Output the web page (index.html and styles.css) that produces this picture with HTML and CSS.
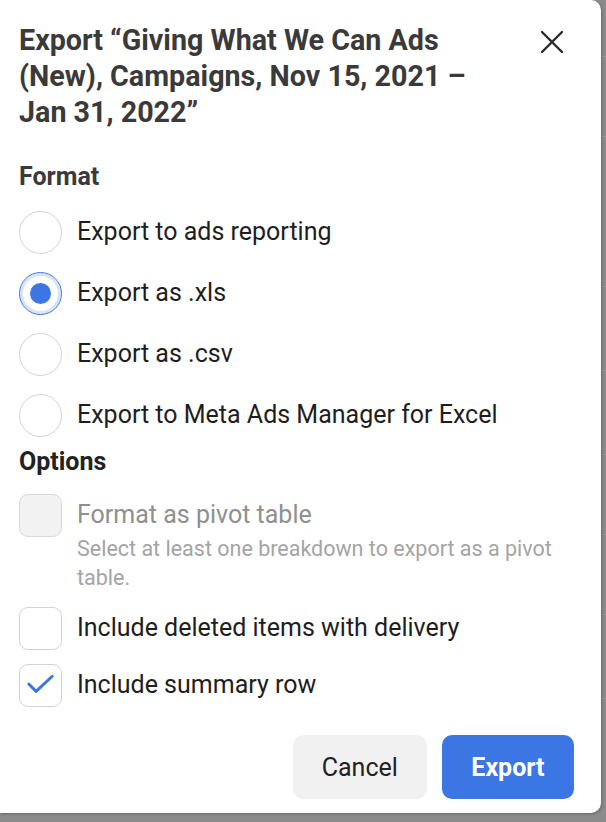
FILE: index.html
```html
<!DOCTYPE html>
<html lang="en">
<head>
<meta charset="utf-8">
<title>Export</title>
<link rel="stylesheet" href="styles.css">
</head>
<body>
<div class="page">
  <div class="bg-col">
    <div class="bg-row r1"><span>e</span></div>
    <div class="bg-row r2"><span>o</span></div>
    <div class="bg-row r3"><span>a</span></div>
    <div class="bg-row r3"><span>a</span></div>
    <div class="bg-row r4"><span>u</span></div>
    <div class="bg-row r4"><span>u</span></div>
    <div class="bg-row r3"><span>e</span></div>
    <div class="bg-row r3"><span>e</span></div>
  </div>
</div>

<div class="dialog">
  <div class="header">
    <h1 class="title">Export “Giving What We Can Ads<br>(New), Campaigns, Nov 15, 2021 –<br>Jan 31, 2022”</h1>
    <button class="close" aria-label="Close">
      <svg width="22" height="22" viewBox="0 0 22 22"><path d="M1 1 L21 21 M21 1 L1 21" stroke="#2b2b2b" stroke-width="2.4" stroke-linecap="round" fill="none"/></svg>
    </button>
  </div>

  <h2 class="section format-h">Format</h2>
  <div class="radios">
    <label class="row"><span class="radio"></span><span class="label">Export to ads reporting</span></label>
    <label class="row"><span class="radio checked"></span><span class="label">Export as .xls</span></label>
    <label class="row"><span class="radio"></span><span class="label">Export as .csv</span></label>
    <label class="row"><span class="radio"></span><span class="label">Export to Meta Ads Manager for Excel</span></label>
  </div>

  <h2 class="section options-h">Options</h2>
  <div class="checks">
    <div class="check-item">
      <label class="row"><span class="box disabled"></span><span class="label muted">Format as pivot table</span></label>
      <p class="hint">Select at least one breakdown to export as a pivot table.</p>
    </div>
    <label class="row"><span class="box"></span><span class="label">Include deleted items with delivery</span></label>
    <label class="row"><span class="box">
      <svg width="42" height="42" viewBox="0 0 42 42"><path d="M9 20 L16.5 27.5 L33 12" stroke="#3b76e4" stroke-width="3" stroke-linecap="round" stroke-linejoin="round" fill="none"/></svg>
    </span><span class="label">Include summary row</span></label>
  </div>

  <div class="footer">
    <button class="btn cancel">Cancel</button>
    <button class="btn primary">Export</button>
  </div>
</div>
</body>
</html>
```

FILE: styles.css
```css
* { box-sizing: border-box; }
html, body { margin: 0; padding: 0; }
body {
  width: 606px;
  height: 822px;
  overflow: hidden;
  background: #8b8b8b;
  font-family: Roboto, "Liberation Sans", Arial, sans-serif;
  position: relative;
}
.page {
  display: flex;
  justify-content: flex-end;
  height: 822px;
}
.bg-col {
  width: 30px;
  padding-top: 56px;
  display: flex;
  flex-direction: column;
}
.bg-row {
  border-top: 1px solid #9a9a9a;
  display: flex;
  align-items: center;
  font-size: 22px;
  color: #1a1a1a;
  padding-left: 2px;
}
.bg-row.r1 { height: 80px; }
.bg-row.r2 { height: 150px; padding-top: 30px; }
.bg-row.r3 { height: 84px; }
.bg-row.r4 { height: 80px; }

.dialog {
  position: absolute;
  left: 0;
  top: 0;
  width: 601px;
  height: 813px;
  background: #fff;
  border-radius: 0 10px 10px 0;
  box-shadow: 1px 1px 3px rgba(0,0,0,0.25);
  padding: 22px 28px 14px 19px;
  display: flex;
  flex-direction: column;
}
.header {
  display: flex;
  justify-content: space-between;
  align-items: flex-start;
}
.title {
  margin: 0;
  font-size: 28.7px;
  line-height: 36px;
  font-weight: 700;
  color: #3a3a3a;
}
.close {
  border: 0;
  background: none;
  padding: 0;
  margin: 9px 10px 0 0;
  width: 22px;
  height: 22px;
  display: flex;
}
.section {
  margin: 0;
  font-size: 25px;
  line-height: 30px;
  font-weight: 700;
}
.format-h { margin-top: 32px; color: #3a3a3a; }
.options-h { margin-top: 11px; color: #222; }

.radios {
  margin-top: 19px;
  display: flex;
  flex-direction: column;
  gap: 19px;
}
.row {
  display: flex;
  align-items: center;
  gap: 15px;
  height: 42px;
}
.label {
  font-size: 25px;
  color: #1e1e1e;
  line-height: 30px;
}
.label.muted { color: #8f8f8f; }
.radio {
  width: 43px;
  height: 43px;
  flex: none;
  border-radius: 50%;
  border: 1px solid #d3d3d3;
  background: #fff;
  display: flex;
  align-items: center;
  justify-content: center;
}
.radio.checked {
  border-color: #3b76e4;
  box-shadow: inset 0 0 0 3px #d9e4f9;
}
.radio.checked::after {
  content: "";
  width: 21px;
  height: 21px;
  border-radius: 50%;
  background: #3b76e4;
}
.checks {
  margin-top: 17px;
  display: flex;
  flex-direction: column;
  gap: 15px;
}
.box {
  width: 43px;
  height: 43px;
  flex: none;
  border-radius: 9px;
  border: 1px solid #d3d3d3;
  background: #fff;
  display: flex;
  align-items: center;
  justify-content: center;
}
.box svg { display: block; }
.box.disabled {
  background: #f2f2f2;
  border-color: #d9d9d9;
}
.hint {
  margin: -2px 0 0 58px;
  font-size: 21.5px;
  line-height: 29px;
  color: #a4a4a4;
}
.footer {
  margin-top: auto;
  margin-right: -1px;
  display: flex;
  justify-content: flex-end;
  gap: 15px;
}
.btn {
  height: 64px;
  border: 0;
  border-radius: 10px;
  font-family: Roboto, "Liberation Sans", Arial, sans-serif;
  font-size: 25px;
  padding: 0 29px;
}
.cancel {
  background: #f1f1f1;
  color: #222;
}
.primary {
  background: #3b76e4;
  color: #fff;
  font-weight: 700;
  padding: 0 29.5px;
}
```
